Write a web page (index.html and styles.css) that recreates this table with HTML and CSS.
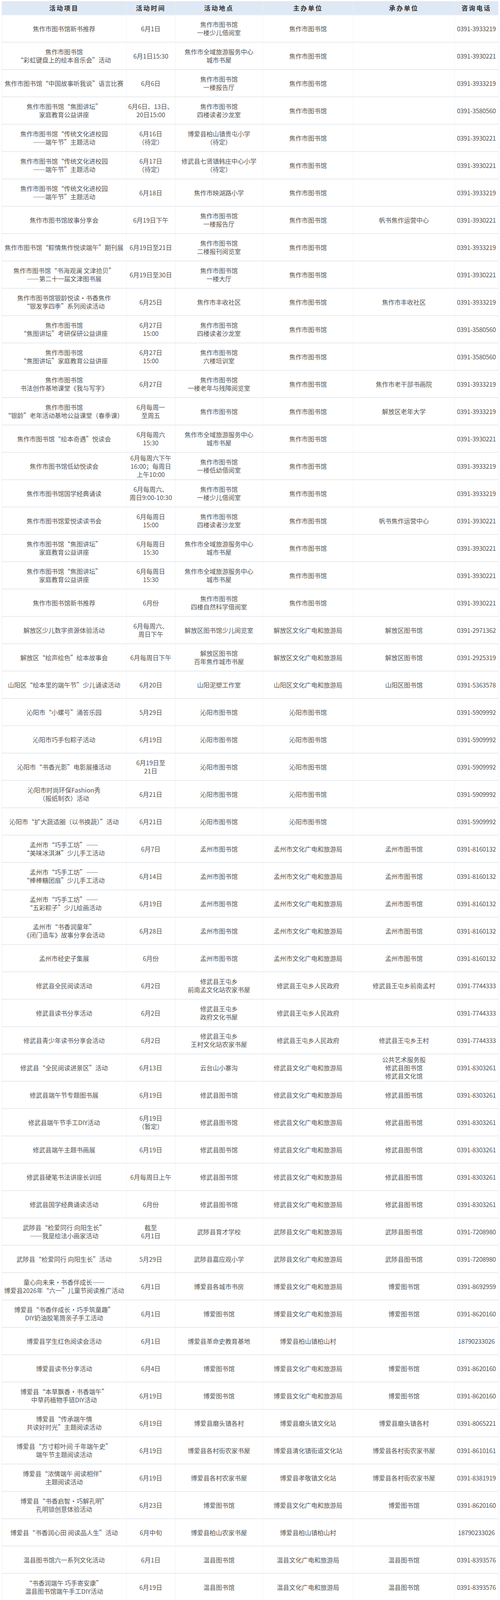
FILE: index.html
```html
<!DOCTYPE html>
<html lang="zh-CN">
<head>
<meta charset="utf-8">
<title>活动安排</title>
<link rel="stylesheet" href="styles.css">
</head>
<body>
<div class="page">
<table class="schedule">
<colgroup>
<col class="c-item"><col class="c-time"><col class="c-place"><col class="c-host"><col class="c-org"><col class="c-tel">
</colgroup>
<thead>
<tr><th>活动项目</th><th>活动时间</th><th>活动地点</th><th>主办单位</th><th>承办单位</th><th>咨询电话</th></tr>
</thead>
<tbody>
<tr><td>焦作市图书馆新书推荐</td><td>6月1日</td><td>焦作市图书馆<br>一楼少儿借阅室</td><td>焦作市图书馆</td><td></td><td>0391-3933219</td></tr>
<tr><td>焦作市图书馆<br>“彩虹键盘上的绘本音乐会”活动</td><td>6月1日15:30</td><td>焦作市全域旅游服务中心<br>城市书屋</td><td>焦作市图书馆</td><td></td><td>0391-3930221</td></tr>
<tr><td>焦作市图书馆“中国故事听我说”语言比赛</td><td>6月6日</td><td>焦作市图书馆<br>一楼报告厅</td><td>焦作市图书馆</td><td></td><td>0391-3933219</td></tr>
<tr><td>焦作市图书馆“焦图讲坛”<br>家庭教育公益讲座</td><td>6月6日、13日、<br>20日15:00</td><td>焦作市图书馆<br>四楼读者沙龙室</td><td>焦作市图书馆</td><td></td><td>0391-3580560</td></tr>
<tr><td>焦作市图书馆“传统文化进校园<br>——端午节”主题活动</td><td>6月16日<br>（待定）</td><td>博爱县柏山镇贵屯小学<br>（待定）</td><td>焦作市图书馆</td><td></td><td>0391-3930221</td></tr>
<tr><td>焦作市图书馆“传统文化进校园<br>——端午节”主题活动</td><td>6月17日<br>（待定）</td><td>修武县七贤镇韩庄中心小学<br>（待定）</td><td>焦作市图书馆</td><td></td><td>0391-3930221</td></tr>
<tr><td>焦作市图书馆“传统文化进校园<br>——端午节”主题活动</td><td>6月18日</td><td>焦作市映湖路小学</td><td>焦作市图书馆</td><td></td><td>0391-3933219</td></tr>
<tr><td>焦作市图书馆故事分享会</td><td>6月19日下午</td><td>焦作市图书馆<br>一楼报告厅</td><td>焦作市图书馆</td><td>帆书焦作运营中心</td><td>0391-3930221</td></tr>
<tr><td>焦作市图书馆“粽情焦作悦读端午”期刊展</td><td>6月19日至21日</td><td>焦作市图书馆<br>二楼报刊阅览室</td><td>焦作市图书馆</td><td></td><td>0391-3933219</td></tr>
<tr><td>焦作市图书馆“书海观澜&nbsp;文津拾贝”<br>——第二十一届文津图书展</td><td>6月19日至30日</td><td>焦作市图书馆<br>一楼大厅</td><td>焦作市图书馆</td><td></td><td>0391-3930221</td></tr>
<tr><td>焦作市图书馆银龄悦读·书香焦作<br>“银发享四季”系列阅读活动</td><td>6月25日</td><td>焦作市丰收社区</td><td>焦作市图书馆</td><td>焦作市丰收社区</td><td>0391-3933219</td></tr>
<tr><td>焦作市图书馆<br>“焦图讲坛”考研保研公益讲座</td><td>6月27日<br>15:00</td><td>焦作市图书馆<br>四楼读者沙龙室</td><td>焦作市图书馆</td><td></td><td>0391-3580560</td></tr>
<tr><td>焦作市图书馆<br>“焦图讲坛”家庭教育公益讲座</td><td>6月27日<br>15:00</td><td>焦作市图书馆<br>六楼培训室</td><td>焦作市图书馆</td><td></td><td>0391-3580560</td></tr>
<tr><td>焦作市图书馆<br>书法创作基地课堂《我与写字》</td><td>6月27日</td><td>焦作市图书馆<br>一楼老年与残障阅览室</td><td>焦作市图书馆</td><td>焦作市老干部书画院</td><td>0391-3933219</td></tr>
<tr><td>焦作市图书馆<br>“银龄”老年活动基地公益课堂（春季课）</td><td>6月每周一<br>至周五</td><td>焦作市图书馆</td><td>焦作市图书馆</td><td>解放区老年大学</td><td>0391-3933219</td></tr>
<tr><td>焦作市图书馆“绘本奇遇”悦读会</td><td>6月每周六<br>15:30</td><td>焦作市全域旅游服务中心<br>城市书屋</td><td>焦作市图书馆</td><td></td><td>0391-3930221</td></tr>
<tr><td>焦作市图书馆低幼悦读会</td><td>6月每周六下午<br>16:00；每周日<br>上午10:00</td><td>焦作市图书馆<br>一楼低幼借阅室</td><td>焦作市图书馆</td><td></td><td>0391-3933219</td></tr>
<tr><td>焦作市图书馆国学经典诵读</td><td>6月每周六、<br>周日9:00-10:30</td><td>焦作市图书馆<br>一楼少儿借阅室</td><td>焦作市图书馆</td><td></td><td>0391-3933219</td></tr>
<tr><td>焦作市图书馆爱悦读读书会</td><td>6月每周日<br>15:00</td><td>焦作市图书馆<br>四楼读者沙龙室</td><td>焦作市图书馆</td><td>帆书焦作运营中心</td><td>0391-3930221</td></tr>
<tr><td>焦作市图书馆“焦图讲坛”<br>家庭教育公益讲座</td><td>6月每周日<br>15:30</td><td>焦作市全域旅游服务中心<br>城市书屋</td><td>焦作市图书馆</td><td></td><td>0391-3930221</td></tr>
<tr><td>焦作市图书馆“焦图讲坛”<br>家庭教育公益讲座</td><td>6月每周日<br>15:30</td><td>焦作市全域旅游服务中心<br>城市书屋</td><td>焦作市图书馆</td><td></td><td>0391-3930221</td></tr>
<tr><td>焦作市图书馆新书推荐</td><td>6月份</td><td>焦作市图书馆<br>四楼自然科学借阅室</td><td>焦作市图书馆</td><td></td><td>0391-3930221</td></tr>
<tr><td>解放区少儿数字资源体验活动</td><td>6月每周六、<br>周日下午</td><td>解放区图书馆少儿阅览室</td><td>解放区文化广电和旅游局</td><td>解放区图书馆</td><td>0391-2971362</td></tr>
<tr><td>解放区“绘声绘色”绘本故事会</td><td>6月每周日下午</td><td>解放区图书馆<br>百年焦作城市书屋</td><td>解放区文化广电和旅游局</td><td>解放区图书馆</td><td>0391-2925319</td></tr>
<tr><td>山阳区“绘本里的端午节”少儿诵读活动</td><td>6月20日</td><td>山阳泥塑工作室</td><td>山阳区文化广电和旅游局</td><td>山阳区图书馆</td><td>0391-5363578</td></tr>
<tr><td>沁阳市“小螺号”涌答乐园</td><td>5月29日</td><td>沁阳市图书馆</td><td>沁阳市图书馆</td><td></td><td>0391-5909992</td></tr>
<tr><td>沁阳市巧手包粽子活动</td><td>6月19日</td><td>沁阳市图书馆</td><td>沁阳市图书馆</td><td></td><td>0391-5909992</td></tr>
<tr><td>沁阳市“书香光影”电影展播活动</td><td>6月19日至<br>21日</td><td>沁阳市图书馆</td><td>沁阳市图书馆</td><td></td><td>0391-5909992</td></tr>
<tr><td>沁阳市时尚环保Fashion秀<br>（报纸制衣）活动</td><td>6月21日</td><td>沁阳市图书馆</td><td>沁阳市图书馆</td><td></td><td>0391-5909992</td></tr>
<tr><td>沁阳市“扩大蔬适圈（以书换蔬）”活动</td><td>6月21日</td><td>沁阳市图书馆</td><td>沁阳市图书馆</td><td></td><td>0391-5909992</td></tr>
<tr><td>孟州市“巧手工坊”——<br>“美味冰淇淋”少儿手工活动</td><td>6月7日</td><td>孟州市图书馆</td><td>孟州市文化广电和旅游局</td><td>孟州市图书馆</td><td>0391-8160132</td></tr>
<tr><td>孟州市“巧手工坊”——<br>“棒棒糖团扇”少儿手工活动</td><td>6月14日</td><td>孟州市图书馆</td><td>孟州市文化广电和旅游局</td><td>孟州市图书馆</td><td>0391-8160132</td></tr>
<tr><td>孟州市“巧手工坊”——<br>“五彩粽子”少儿绘画活动</td><td>6月19日</td><td>孟州市图书馆</td><td>孟州市文化广电和旅游局</td><td>孟州市图书馆</td><td>0391-8160132</td></tr>
<tr><td>孟州市“书香润童年”<br>《闭门造车》故事分享会活动</td><td>6月28日</td><td>孟州市图书馆</td><td>孟州市文化广电和旅游局</td><td>孟州市图书馆</td><td>0391-8160132</td></tr>
<tr><td>孟州市经史子集展</td><td>6月份</td><td>孟州市图书馆</td><td>孟州市文化广电和旅游局</td><td>孟州市图书馆</td><td>0391-8160132</td></tr>
<tr><td>修武县全民阅读活动</td><td>6月2日</td><td>修武县王屯乡<br>前南孟文化站农家书屋</td><td>修武县王屯乡人民政府</td><td>修武县王屯乡前南孟村</td><td>0391-7744333</td></tr>
<tr><td>修武县读书分享活动</td><td>6月2日</td><td>修武县王屯乡<br>政府文化书屋</td><td>修武县王屯乡人民政府</td><td></td><td>0391-7744333</td></tr>
<tr><td>修武县青少年读书分享会活动</td><td>6月2日</td><td>修武县王屯乡<br>王村文化站农家书屋</td><td>修武县王屯乡人民政府</td><td>修武县王屯乡王村</td><td>0391-7744333</td></tr>
<tr><td>修武县“全民阅读进景区”活动</td><td>6月13日</td><td>云台山小寨沟</td><td>修武县文化广电和旅游局</td><td>公共艺术服务股<br>修武县图书馆<br>修武县文化馆</td><td>0391-8303261</td></tr>
<tr><td>修武县端午节专题图书展</td><td>6月19日</td><td>修武县图书馆</td><td>修武县文化广电和旅游局</td><td>修武县图书馆</td><td>0391-8303261</td></tr>
<tr><td>修武县端午节手工DIY活动</td><td>6月19日<br>（暂定）</td><td>修武县图书馆</td><td>修武县文化广电和旅游局</td><td>修武县图书馆</td><td>0391-8303261</td></tr>
<tr><td>修武县端午主题书画展</td><td>6月19日</td><td>修武县图书馆</td><td>修武县文化广电和旅游局</td><td>修武县图书馆</td><td>0391-8303261</td></tr>
<tr><td>修武县硬笔书法讲座长训班</td><td>6月每周日上午</td><td>修武县图书馆</td><td>修武县文化广电和旅游局</td><td>修武县图书馆</td><td>0391-8303261</td></tr>
<tr><td>修武县国学经典诵读活动</td><td>6月份</td><td>修武县图书馆</td><td>修武县文化广电和旅游局</td><td>修武县图书馆</td><td>0391-8303261</td></tr>
<tr><td>武陟县“检爱同行&nbsp;向阳生长”<br>——我是绘法小画家活动</td><td>截至<br>6月1日</td><td>武陟县育才学校</td><td>武陟县文化广电和旅游局</td><td>武陟县图书馆</td><td>0391-7208980</td></tr>
<tr><td>武陟县“检爱同行&nbsp;向阳生长”活动</td><td>5月29日</td><td>武陟县嘉应观小学</td><td>武陟县文化广电和旅游局</td><td>武陟县图书馆</td><td>0391-7208980</td></tr>
<tr><td>童心向未来·书香伴成长——<br>博爱县2026年“六一”儿童节阅读推广活动</td><td>6月1日</td><td>博爱县各城市书房</td><td>博爱县文化广电和旅游局</td><td>博爱图书馆</td><td>0391-8692959</td></tr>
<tr><td>博爱县“书香伴成长·巧手筑童趣”<br>DIY奶油胶笔筒亲子手工活动</td><td>6月1日</td><td>博爱图书馆</td><td>博爱县文化广电和旅游局</td><td>博爱图书馆</td><td>0391-8620160</td></tr>
<tr><td>博爱县学生红色阅读会活动</td><td>6月1日</td><td>博爱县革命史教育基地</td><td>博爱县柏山镇柏山村</td><td></td><td>18790233026</td></tr>
<tr><td>博爱县读书分享活动</td><td>6月4日</td><td>博爱图书馆</td><td>博爱县文化广电和旅游局</td><td>博爱图书馆</td><td>0391-8620160</td></tr>
<tr><td>博爱县“本草飘香·书香端午”<br>中草药植物手链DIY活动</td><td>6月19日</td><td>博爱图书馆</td><td>博爱县文化广电和旅游局</td><td>博爱图书馆</td><td>0391-8620160</td></tr>
<tr><td>博爱县“传承端午情<br>共读好时光”主题阅读活动</td><td>6月19日</td><td>博爱县磨头镇各村</td><td>博爱县磨头镇文化站</td><td>博爱县磨头镇各村</td><td>0391-8065221</td></tr>
<tr><td>博爱县“方寸粽叶间&nbsp;千年端午史”<br>端午节主题阅读活动</td><td>6月19日</td><td>博爱县各村街农家书屋</td><td>博爱县清化镇街道文化站</td><td>博爱县各村街农家书屋</td><td>0391-8610161</td></tr>
<tr><td>博爱县“浓情端午&nbsp;阅读相伴”<br>主题阅读活动</td><td>6月19日</td><td>博爱县各村农家书屋</td><td>博爱县孝敬镇文化站</td><td>博爱县各村街农家书屋</td><td>0391-8381919</td></tr>
<tr><td>博爱县“书香启智·巧解孔明”<br>孔明锁创意体验活动</td><td>6月23日</td><td>博爱图书馆</td><td>博爱县文化广电和旅游局</td><td>博爱图书馆</td><td>0391-8620160</td></tr>
<tr><td>博爱县“书香润心田&nbsp;阅读品人生”活动</td><td>6月中旬</td><td>博爱县柏山农家书屋</td><td>博爱县柏山镇柏山村</td><td></td><td>18790233026</td></tr>
<tr><td>温县图书馆六一系列文化活动</td><td>6月1日</td><td>温县图书馆</td><td>温县文化广电和旅游局</td><td>温县图书馆</td><td>0391-8393576</td></tr>
<tr><td>“书香润端午&nbsp;巧手寄安康”<br>温县图书馆端午手工DIY活动</td><td>6月19日</td><td>温县图书馆</td><td>温县文化广电和旅游局</td><td>温县图书馆</td><td>0391-8393576</td></tr>
</tbody>
</table>
</div>
</body>
</html>
```

FILE: styles.css
```css
html, body {
  margin: 0;
  padding: 0;
  background: #ffffff;
}

.page {
  padding: 3px 4px 0 4px;
}

.schedule {
  width: 1272px;
  border-collapse: separate;
  border-spacing: 0;
  table-layout: fixed;
  font-family: "Noto Sans CJK SC", "Liberation Serif", serif;
  font-size: 16px;
  line-height: 21px;
  color: #555555;
}

.c-item { width: 320px; }
.c-time { width: 125px; }
.c-place { width: 224px; }
.c-host { width: 232px; }
.c-org { width: 259px; }
.c-tel { width: 112px; }

.schedule th {
  height: 34px;
  padding: 0;
  background: #dfe9f5;
  color: #333333;
  font-weight: bold;
  font-size: 16px;
  letter-spacing: 3px;
  text-align: center;
  vertical-align: middle;
  border-right: 1px solid #e9eef4;
  border-bottom: 2px solid #e6eaef;
}

.schedule td {
  height: 68px;
  padding: 0 3px;
  text-align: center;
  vertical-align: middle;
  white-space: nowrap;
  border-right: 1px solid #eef1f4;
  border-bottom: 2px solid #e7eaee;
}

.schedule th:first-child,
.schedule td:first-child {
  border-left: 1px solid #eef1f4;
}

.schedule td:nth-child(6) {
  letter-spacing: -0.3px;
}
```
